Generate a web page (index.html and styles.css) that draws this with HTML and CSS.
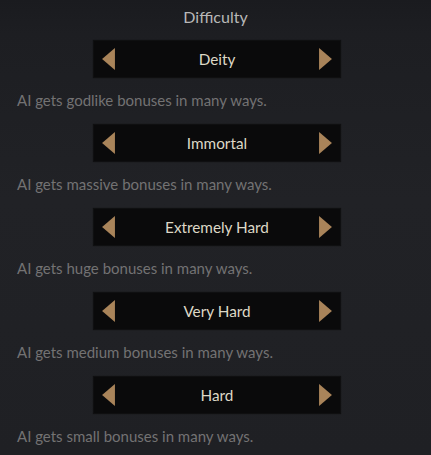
FILE: index.html
```html
<!DOCTYPE html>
<html>
<head>
<meta charset="utf-8">
<link rel="stylesheet" href="styles.css">
</head>
<body>
<div class="panel">
  <div class="title">Difficulty</div>
  <div class="list">
    <div class="item">
      <div class="selector">
        <svg class="arrow" viewBox="0 0 14 24"><polygon points="14,0 14,24 0,12"/></svg>
        <span class="value">Deity</span>
        <svg class="arrow" viewBox="0 0 14 24"><polygon points="0,0 0,24 14,12"/></svg>
      </div>
      <div class="desc">AI gets godlike bonuses in many ways.</div>
    </div>
    <div class="item">
      <div class="selector">
        <svg class="arrow" viewBox="0 0 14 24"><polygon points="14,0 14,24 0,12"/></svg>
        <span class="value">Immortal</span>
        <svg class="arrow" viewBox="0 0 14 24"><polygon points="0,0 0,24 14,12"/></svg>
      </div>
      <div class="desc">AI gets massive bonuses in many ways.</div>
    </div>
    <div class="item">
      <div class="selector">
        <svg class="arrow" viewBox="0 0 14 24"><polygon points="14,0 14,24 0,12"/></svg>
        <span class="value">Extremely Hard</span>
        <svg class="arrow" viewBox="0 0 14 24"><polygon points="0,0 0,24 14,12"/></svg>
      </div>
      <div class="desc">AI gets huge bonuses in many ways.</div>
    </div>
    <div class="item">
      <div class="selector">
        <svg class="arrow" viewBox="0 0 14 24"><polygon points="14,0 14,24 0,12"/></svg>
        <span class="value">Very Hard</span>
        <svg class="arrow" viewBox="0 0 14 24"><polygon points="0,0 0,24 14,12"/></svg>
      </div>
      <div class="desc">AI gets medium bonuses in many ways.</div>
    </div>
    <div class="item">
      <div class="selector">
        <svg class="arrow" viewBox="0 0 14 24"><polygon points="14,0 14,24 0,12"/></svg>
        <span class="value">Hard</span>
        <svg class="arrow" viewBox="0 0 14 24"><polygon points="0,0 0,24 14,12"/></svg>
      </div>
      <div class="desc">AI gets small bonuses in many ways.</div>
    </div>
  </div>
</div>
</body>
</html>
```
FILE: styles.css
```css
html, body {
  margin: 0;
  padding: 0;
  background: #1f2024;
}
body {
  width: 431px;
  height: 455px;
  overflow: hidden;
  font-family: "Lato", "Noto Sans", sans-serif;
}
.panel {
  height: 455px;
  background: linear-gradient(180deg, #1a1b1f 0px, #1d1e22 34px, #212226 200px, #1f2024 455px);
}
.title {
  height: 34px;
  line-height: 34px;
  text-align: center;
  color: #b8b8b8;
  font-size: 16px;
}
.list {
  padding-top: 7px;
  display: flex;
  flex-direction: column;
}
.item {
  height: 84px;
  display: flex;
  flex-direction: column;
}
.selector {
  margin-left: 94px;
  width: 246px;
  height: 36px;
  background: #0a0a0b;
  box-shadow: 0 0 1px 1px rgba(8, 8, 9, 0.7);
  display: flex;
  align-items: center;
  justify-content: space-between;
  padding: 0 8px 0 8px;
  box-sizing: border-box;
}
.arrow {
  width: 13px;
  height: 22px;
  fill: #a9845a;
}
.value {
  color: #ddd8c6;
  font-size: 15.3px;
}
.desc {
  margin-top: 13px;
  margin-left: 17px;
  line-height: 20px;
  font-size: 15px;
  color: #737273;
}
```
